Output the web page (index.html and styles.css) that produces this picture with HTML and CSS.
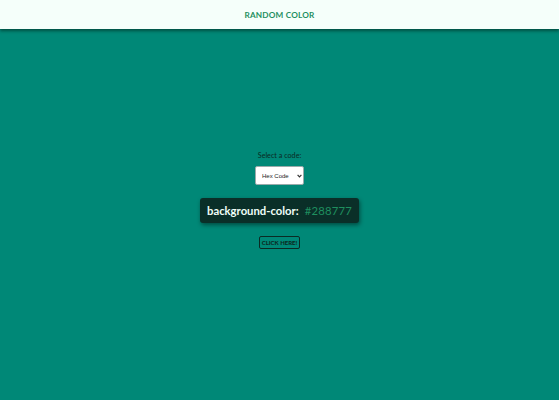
FILE: index.html
```html
<!DOCTYPE html>
<html lang="en">
<head>
<meta charset="utf-8">
<title>Random Color</title>
<link rel="stylesheet" href="styles.css">
</head>
<body>
<header class="header">
  <h1 class="title">RANDOM COLOR</h1>
</header>
<main class="main">
  <label class="label" for="code">Select a code:</label>
  <div class="select-wrap">
    <select class="select" id="code">
      <option>Hex Code</option>
      <option>RGB</option>
    </select>
    <svg class="arrow" width="5" height="4" viewBox="0 0 5 4"><path d="M0.6 0.8 L2.5 2.8 L4.4 0.8" fill="none" stroke="#333" stroke-width="1.2"/></svg>
  </div>
  <div class="code-box">
    <span class="prop">background-color:</span>
    <span class="value">#288777</span>
  </div>
  <button class="btn">CLICK HERE!</button>
</main>
</body>
</html>
```
FILE: styles.css
```css
* { box-sizing: border-box; }
html, body { height: 100%; }
body {
  margin: 0;
  background: #008877;
  font-family: Lato, "Noto Sans", sans-serif;
  display: flex;
  flex-direction: column;
}
.header {
  flex: none;
  height: 29px;
  background: #f5fffa;
  box-shadow: 0 2px 3px rgba(0, 40, 30, 0.6);
  display: flex;
  align-items: center;
  justify-content: center;
  position: relative;
  z-index: 1;
}
.title {
  margin: 0;
  font-size: 8.2px;
  font-weight: 700;
  color: #1f8f5f;
  letter-spacing: 0.2px;
}
.main {
  flex: 1;
  display: flex;
  flex-direction: column;
  align-items: center;
  padding-top: 121px;
}
.label {
  font-size: 7.2px;
  color: #0b2b24;
  line-height: 11px;
}
.select-wrap {
  flex: none;
  margin-top: 5px;
  position: relative;
  display: block;
  width: 49px;
  height: 19px;
}
.select {
  appearance: none;
  -webkit-appearance: none;
  display: block;
  width: 49px;
  height: 19px;
  font-size: 6px;
  font-family: "Liberation Sans", Arial, sans-serif;
  background: #fff;
  border: 1px solid #9aa;
  border-radius: 2px;
  padding: 0 0 0 6px;
  color: #222;
  margin: 0;
}
.arrow {
  position: absolute;
  right: 2px;
  top: 8px;
  pointer-events: none;
}
.code-box {
  flex: none;
  margin-top: 13px;
  height: 25px;
  padding: 0 7px 0 7px;
  background: #0a2f28;
  border-radius: 3px;
  box-shadow: 1px 2px 4px rgba(0, 0, 0, 0.45);
  display: flex;
  align-items: center;
  gap: 6px;
  font-size: 11.3px;
}
.prop {
  color: #f0fff8;
  font-weight: 700;
}
.value {
  color: #1f8f5f;
  letter-spacing: 0.2px;
}
.btn {
  flex: none;
  margin-top: 13px;
  height: 13px;
  padding: 0 2px;
  background: transparent;
  border: 1px solid #0b2b24;
  border-radius: 2px;
  font-family: Lato, sans-serif;
  font-size: 6px;
  font-weight: 900;
  color: #0b2b24;
  line-height: 1;
}
```
